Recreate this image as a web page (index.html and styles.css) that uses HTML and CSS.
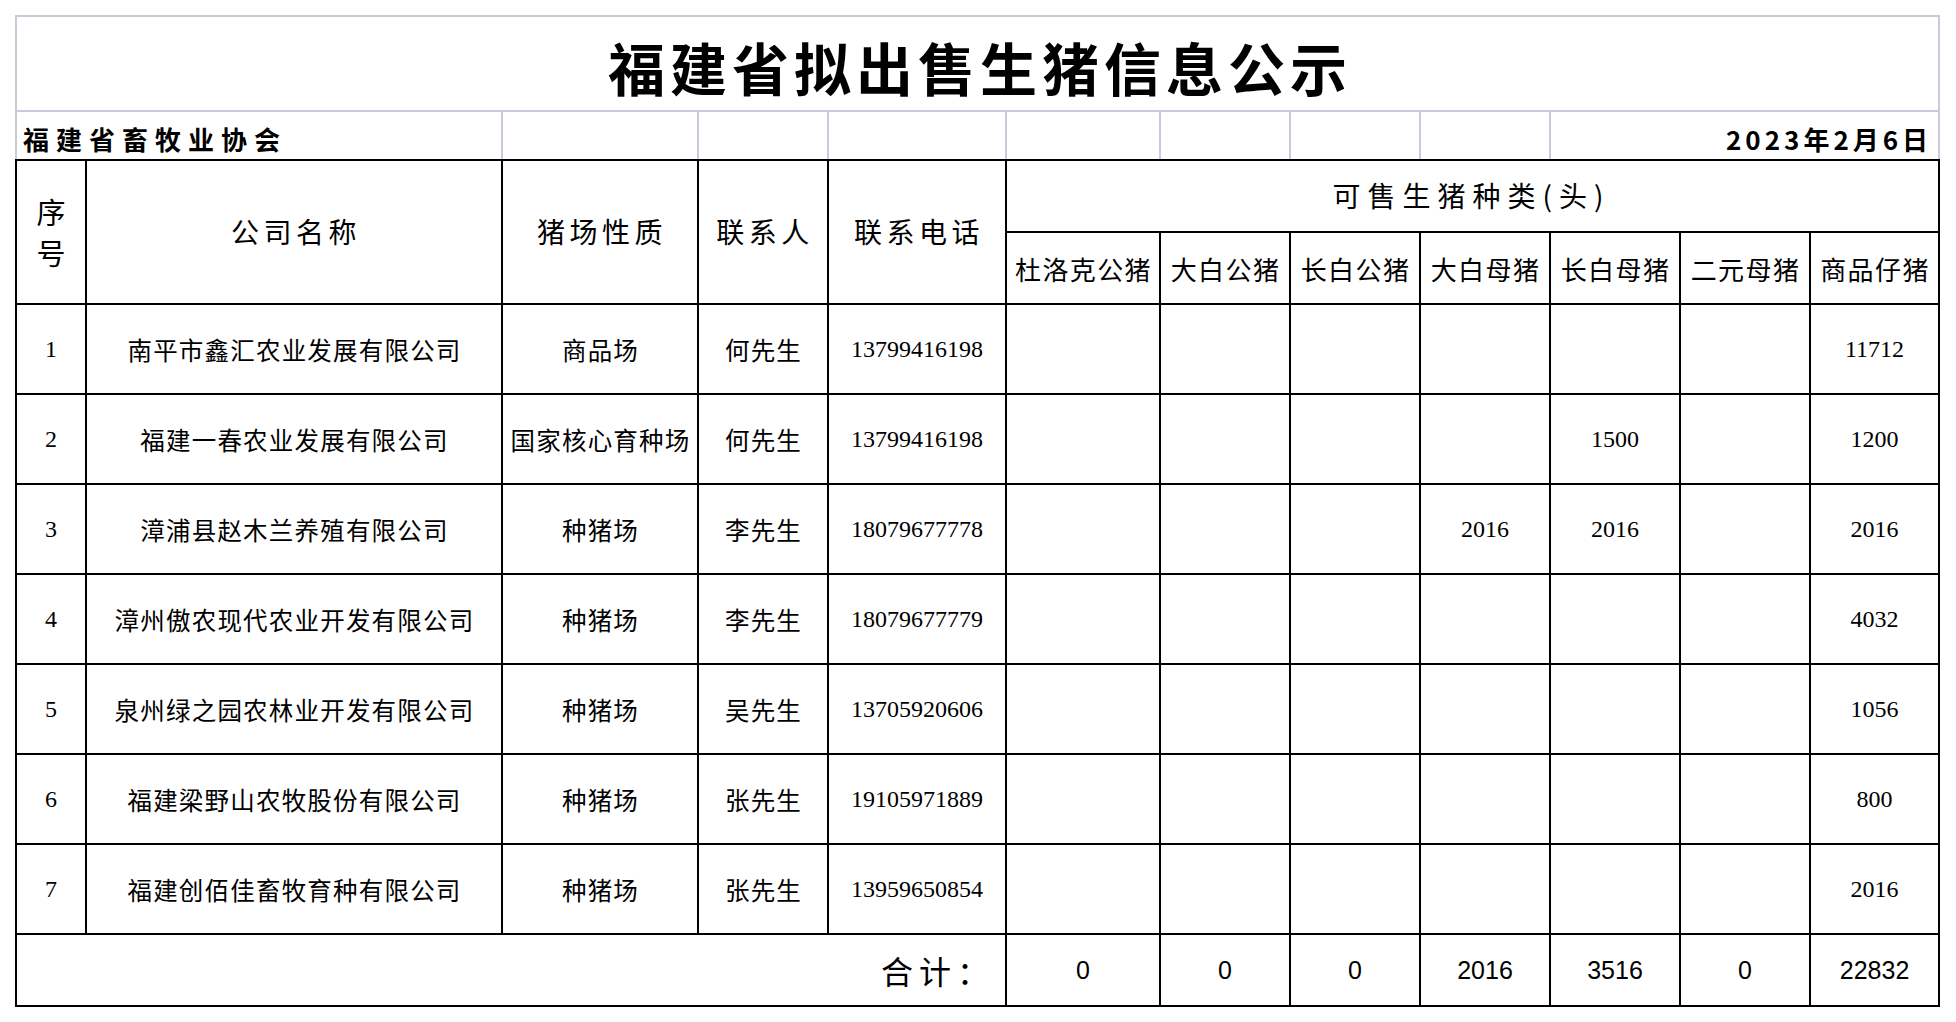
FILE: index.html
```html
<!DOCTYPE html>
<html lang="zh-CN">
<head>
<meta charset="utf-8">
<title>福建省拟出售生猪信息公示</title>
<link rel="stylesheet" href="styles.css">
</head>
<body>
<table class="sheet">
  <colgroup>
    <col class="c-no"><col class="c-name"><col class="c-type"><col class="c-person"><col class="c-phone">
    <col class="c-duroc"><col class="c-w"><col class="c-w"><col class="c-w"><col class="c-w"><col class="c-w"><col class="c-last">
  </colgroup>
  <tr class="r-title">
    <td colspan="12" class="title">福建省拟出售生猪信息公示</td>
  </tr>
  <tr class="r-sub">
    <td colspan="2" class="sub org">福建省畜牧业协会</td>
    <td class="sub"></td><td class="sub"></td><td class="sub"></td><td class="sub"></td><td class="sub"></td><td class="sub"></td><td class="sub"></td>
    <td colspan="3" class="sub date">2023年2月6日</td>
  </tr>
  <tr class="r-head">
    <td rowspan="2" class="hd hd-no">序<br>号</td>
    <td rowspan="2" class="hd">公司名称</td>
    <td rowspan="2" class="hd">猪场性质</td>
    <td rowspan="2" class="hd">联系人</td>
    <td rowspan="2" class="hd">联系电话</td>
    <td colspan="7" class="hd hd-group">可售生猪种类(头)</td>
  </tr>
  <tr class="r-head">
    <td class="sh">杜洛克公猪</td><td class="sh">大白公猪</td><td class="sh">长白公猪</td><td class="sh">大白母猪</td><td class="sh">长白母猪</td><td class="sh">二元母猪</td><td class="sh">商品仔猪</td>
  </tr>
  <tr class="r-data">
    <td>1</td><td class="cn">南平市鑫汇农业发展有限公司</td><td class="cn">商品场</td><td class="cn">何先生</td><td>13799416198</td>
    <td></td><td></td><td></td><td></td><td></td><td></td><td>11712</td>
  </tr>
  <tr class="r-data">
    <td>2</td><td class="cn">福建一春农业发展有限公司</td><td class="cn">国家核心育种场</td><td class="cn">何先生</td><td>13799416198</td>
    <td></td><td></td><td></td><td></td><td>1500</td><td></td><td>1200</td>
  </tr>
  <tr class="r-data">
    <td>3</td><td class="cn">漳浦县赵木兰养殖有限公司</td><td class="cn">种猪场</td><td class="cn">李先生</td><td>18079677778</td>
    <td></td><td></td><td></td><td>2016</td><td>2016</td><td></td><td>2016</td>
  </tr>
  <tr class="r-data">
    <td>4</td><td class="cn">漳州傲农现代农业开发有限公司</td><td class="cn">种猪场</td><td class="cn">李先生</td><td>18079677779</td>
    <td></td><td></td><td></td><td></td><td></td><td></td><td>4032</td>
  </tr>
  <tr class="r-data">
    <td>5</td><td class="cn">泉州绿之园农林业开发有限公司</td><td class="cn">种猪场</td><td class="cn">吴先生</td><td>13705920606</td>
    <td></td><td></td><td></td><td></td><td></td><td></td><td>1056</td>
  </tr>
  <tr class="r-data">
    <td>6</td><td class="cn">福建梁野山农牧股份有限公司</td><td class="cn">种猪场</td><td class="cn">张先生</td><td>19105971889</td>
    <td></td><td></td><td></td><td></td><td></td><td></td><td>800</td>
  </tr>
  <tr class="r-data">
    <td>7</td><td class="cn">福建创佰佳畜牧育种有限公司</td><td class="cn">种猪场</td><td class="cn">张先生</td><td>13959650854</td>
    <td></td><td></td><td></td><td></td><td></td><td></td><td>2016</td>
  </tr>
  <tr class="r-total">
    <td colspan="5" class="total-label">合计：</td>
    <td>0</td><td>0</td><td>0</td><td>2016</td><td>3516</td><td>0</td><td>22832</td>
  </tr>
</table>
</body>
</html>
```
FILE: styles.css
```css
html, body {
  margin: 0;
  padding: 0;
  background: #ffffff;
}

body {
  padding: 15px 0 0 15px;
  font-family: "Noto Sans CJK SC", sans-serif;
  color: #000;
}

.sheet {
  border-collapse: collapse;
  table-layout: fixed;
  width: 1925px;
}

.c-no { width: 70px; }
.c-name { width: 416px; }
.c-type { width: 196px; }
.c-person { width: 130px; }
.c-phone { width: 178px; }
.c-duroc { width: 154px; }
.c-w { width: 130px; }
.c-last { width: 129px; }

.sheet td {
  padding: 0;
  border: 2px solid #000;
  text-align: center;
  vertical-align: middle;
  white-space: nowrap;
  overflow: hidden;
}

/* title */
.r-title td { height: 87px; }
.sheet td.title {
  border: 2px solid #c6ccda;
  font-family: "Noto Sans CJK SC", sans-serif;
  font-weight: 700;
  font-size: 57px;
  letter-spacing: 5px;
  padding: 6px 0 0 5px;
  line-height: 1;
}

/* association / date row */
.r-sub td { height: 41px; }
.sheet td.sub {
  border-top: 2px solid #c6ccda;
  border-left: 2px solid #c6ccda;
  border-right: 2px solid #c6ccda;
  border-bottom: 2px solid #000;
  font-weight: 700;
  font-size: 26px;
  letter-spacing: 7px;
  line-height: 1;
  padding-top: 6px;
}
.sheet td.org {
  text-align: left;
  padding-left: 6px;
}
.sheet td.date {
  text-align: right;
  letter-spacing: 4px;
  padding-right: 6px;
}

/* headers */
.r-head td { height: 70px; }
.sheet td.hd {
  font-size: 28px;
  letter-spacing: 4.5px;
  padding-left: 4px;
  line-height: 1.2;
}
.sheet td.hd-no {
  font-size: 29px;
  letter-spacing: 0;
  padding-left: 0;
  line-height: 41px;
}
.sheet td.hd-group {
  font-size: 28px;
  letter-spacing: 7px;
  padding-left: 0;
  padding-right: 2px;
}
.sheet td.sh {
  font-size: 26px;
  letter-spacing: 1.4px;
  padding-left: 1px;
}

/* data */
.r-data td {
  height: 88px;
  font-family: "Liberation Serif", "Noto Sans CJK SC", serif;
  font-size: 24px;
}
.sheet td.cn {
  font-size: 24.5px;
  letter-spacing: 1.2px;
  padding-left: 1px;
}

/* total */
.r-total td {
  height: 70px;
  font-family: "Liberation Sans", Arial, sans-serif;
  font-size: 25px;
}
.sheet td.total-label {
  text-align: right;
  font-family: "Noto Sans CJK SC", sans-serif;
  font-size: 32px;
  letter-spacing: 6px;
  padding-right: 10px;
}
```
